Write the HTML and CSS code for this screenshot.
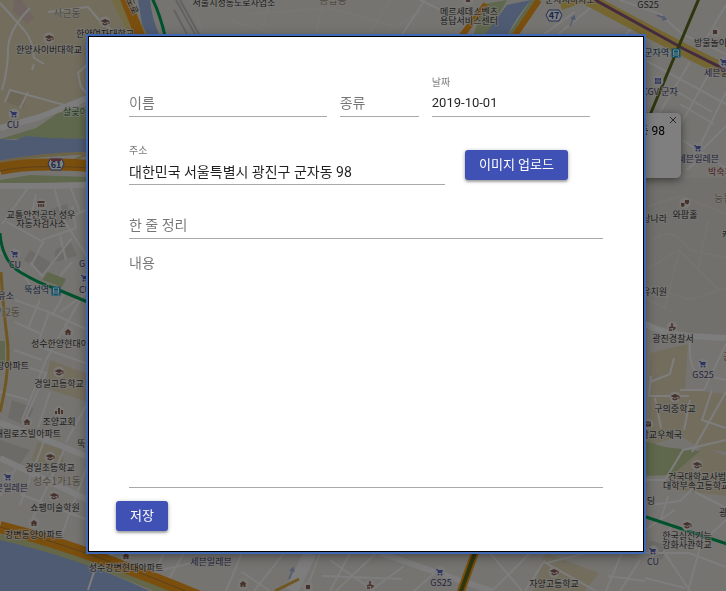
FILE: index.html
```html
<!DOCTYPE html>
<html lang="ko">
<head>
<meta charset="utf-8">
<meta name="viewport" content="width=device-width, initial-scale=1">
<title>장소 등록</title>
<link rel="stylesheet" href="styles.css">
</head>
<body>
<svg class="map" viewBox="0 0 726 591" preserveAspectRatio="xMidYMid slice" aria-hidden="true">
  <defs>
    <g id="school"><circle r="5.500" fill="#f4f2ee"/><path d="M-4.500-1 0-3 4.500-1 0 1zM-2.500.8 0 2l2.500-1.200V2.500L0 3.500l-2.500-1zM3.500-1h1v3h-1z" fill="#8d6257"/></g>
    <g id="cart"><circle r="5.500" fill="#f4f2f4"/><path d="M-4-3h1.500l.5 1h5l-1 3h-4l-1-3h-1z" fill="#5c6bc0"/><circle cx="-1.500" cy="2.500" r="1" fill="#5c6bc0"/><circle cx="1.500" cy="2.500" r="1" fill="#5c6bc0"/></g>
    <g id="home"><circle r="5.500" fill="#f4f2ee"/><path d="M-3.500 0 0-3 3.500 0H2.500v3h-2v-2h-1v2h-2V0z" fill="#8d6257"/></g>
    <g id="place"><circle r="5.500" fill="#f4f2ee"/><path d="M-2-2h4v4h-4z" fill="#8d6257"/></g>
    <g id="church"><circle r="5.500" fill="#f4f2ee"/><path d="M-4 0h2v3h-2zM-1-3h2v6h-2zM2-1h2v4h-2z" fill="#8d6257"/></g>
    <g id="museum"><circle r="5.500" fill="#f4f2ee"/><path d="M-3.500-3h7v2h-7zM-3 0h1.500v3h-1.500zM-.7 0h1.500v3h-1.500zM1.600 0h1.500v3h-1.500z" fill="#8d6257"/></g>
    <g id="cinema"><circle r="5.500" fill="#f4f2f4"/><path d="M-3-3h6v6h-6z" fill="#5c6bc0"/><path d="M-1-3v6M1-3v6M-3 0h6" stroke="#f4f2f4" stroke-width=".6"/></g>
    <g id="mail"><circle r="5.500" fill="#f4f2ee"/><path d="M-3-2.500h6v5h-6z" fill="#8d6257"/><path d="M-3-2.500 0 .5l3-3" fill="none" stroke="#f4f2ee"/></g>
    <g id="masks"><circle r="5.500" fill="#f4f2ee"/><path d="M0-3h4v3l-2 1.500-2-1.500zM-4 0h3.500v3l-1.700 1-1.800-1z" fill="#8d6257"/></g>
    <g id="figure"><circle r="5.500" fill="#f4f2ee"/><path d="M0-4v4l-3 1m3-1 3 1-2 2M-3 3h3" fill="none" stroke="#8d6257" stroke-width="1.500"/></g>
    <g id="station"><path d="M-4.500-4.500h9v9h-9z" fill="#12a5dc"/><path d="M-2.500-3h5v5h-5zM-2 2.500l-1 1.500M2 2.500l1 1.500" fill="none" stroke="#fff"/><path d="M-2 0h4" stroke="#fff"/></g>
  </defs>

  <rect width="726" height="591" fill="#ebe8e1"/>

  <!-- campuses and blocks -->
  <path d="M0 0h112l26 36-46 64-45 18-47 8z" fill="#e6dbbd"/>
  <path d="M14 0h8l12 18-7 6-14-13z" fill="#e3cac5"/>
  <path d="M10 90l17 5-3 13-18-6z" fill="#d9ceaf"/>
  <path d="M50 360l38 14v28l-43-14zM38 442l24 7 3 22-34-11z" fill="#e6dbbd"/>
  <path d="M650 353l38-9-3 45 41 5v58l-26-4-20-12-32 10zM668 476l35-30 23 10v40l-50-6zM545 553l54 20-14 18h-52z" fill="#e6dbbd"/>
  <path d="M645 178h81v160l-35-5-46-10z" fill="#e4e0d8"/>
  <path d="M49 210l18-6 4 14-14 8zM55 250l16-8 6 14-22 6zM30 250l20 12-4 14-22-16zM0 440l30 10-10 14-20-6zM12 400l22 8-8 18-18-8zM650 540l18 6-6 14-16-5z" fill="#d9d6cf"/>

  <!-- parks and water -->
  <path d="M0 139l36-11 22-15 32-8v34zM0 180l30-5 60 2v5l-60 1-30 4zM645 441l20 6 35 4-28 24-27 1zM48 272l18 7-4 8-20-7zM0 341h5v22l-5 2z" fill="#bfd19b"/>
  <path d="M0 139l16 1 10-4 24 2 40 1v14l-30 3-40 2-20 5z" fill="#9db7e6"/>
  <path d="M138 0h12q2 20 10 36h-16z" fill="#9db7e6"/>
  <path d="M484 4l23-4-20 36h-14zM531 0h8l-28 36h-4z" fill="#bfd19b"/>
  <path d="M507 5l24-5q-14 16-24 36h-23z" fill="#9db7e6"/>
  <path d="M0 538q70 16 150 53H0z" fill="#9db7e6"/>

  <!-- local streets -->
  <g class="streets">
    <path d="M30 8Q8 30 8 50T2 90M0 3l25 28q8 10 9 27l10 6M34 64l-2 6M48 12l40-5 12 14 16 12M5 102l5-12 65 18 15-14M90 62L78 73l3 14 7 8M28 92l-8 16"/>
    <path d="M0 128l40-11 50-20" stroke-width="6"/>
    <path d="M0 186h50l38-1" stroke-width="6"/>
    <path d="M54 186q8 34 16 44l18 28M70 186l10 26M2 224l26-36M7 222l36 20-12 24M36 194l-6 28M42 240l34-12-4-22M60 236l6 24M30 262l12 14 30-38M72 262l-12 14M75 215l13-6M0 252l20 16 14 24"/>
    <path d="M15 300l34 12-12 34 51 18M49 312l39 18M40 300l-12 28M64 294l-12 22M88 286l-42 74-24 60M60 312l28-20M15 322l26 12M14 350l28 10M20 365l26 8-20 44M0 392l28 8M50 392l-12 36M88 402l-22 40"/>
    <path d="M0 423l40 14 48 20M0 458l88 42" stroke-width="6"/>
    <path d="M44 441l-24 64M64 450l-32 70M88 464l-26 70M16 468l-16 28M20 494l68 26"/>
    <path d="M190 0q10 18 12 36M230 20l50 16M270 0l-10 36M325 0l-10 36M390 0l-22 36M440 0l-60 36M250 14l80-6 70 20" stroke="#efede7"/>
    <path d="M420 0l55 26M425 0l-24 36M575 12l-34 24M600 0l-44 36"/>
    <path d="M620 0l40 14 22 20 44 20M645 60l81 44M640 20l-16 16M726 5l-30 50M690 62l-42 70M712 68l-40 72M726 92l-34 70M680 104l34 20M674 90l38 22M645 110l35 10M682 140l44 28M700 152l26-26M686 170l22-16"/>
    <path d="M648 206l34-10 44 18M652 240q20-16 38 10l36 8M645 270l34-20 40 40M660 290l30 10 36-12M680 250l-16 60M708 220l-10 50M645 298l28 14" stroke="#e9e6e0"/>
    <path d="M645 324q20 10 44 12l37 2" stroke-width="6"/>
    <path d="M690 340q-2 30 10 34l26 6M726 344l-22 46h-24M651 376l-2 20h40M650 382l20-8 4-16M726 392l-34 60M712 390l-10 30 24 8M655 398l6 30M690 400l-6 30"/>
    <path d="M645 480h20l18-30 43-10M650 505l30-4 14-14M668 496l-8 26M695 492l31 16M645 530l30-20M672 522l-8 30 26 39M645 553h44l37 14M702 540l-14 51M726 520l-32 30M645 578l40 10"/>
    <path d="M88 590l10-30 18-7M164 553l-14 30M184 553l-20 34M204 560l-50 12M242 553l-16 38M242 572l28 19M284 553l-30 38M320 553l-14 38M330 560l44 31M350 553l-20 38M376 553l-40 38M404 566l-34 25M436 572l-22 19M322 576l80 3"/>
    <path d="M310 553l-18 38" stroke-width="13"/>
    <path d="M380 553l70 24 42 14" stroke-width="6"/>
    <path d="M490 553l32 38M530 553l-38 38M545 560l-20 31M586 553l-40 10 50 28M622 553l-16 38M640 560l-20 31M608 576l37 5"/>
  </g>

  <!-- arterial roads -->
  <path d="M118-4l22 42" stroke="#e8d68a" stroke-width="16"/>
  <path d="M124-4l17 42" stroke="#f59c1b" stroke-width="10"/>
  <path d="M539 0l-26 38M486 4l-26 34" stroke="#f59c1b" stroke-width="6"/>
  <path d="M560 4l22-8L684 50l44 22" fill="none" stroke="#eacb62" stroke-width="13"/>
  <path d="M588-4L684 49l44 22" fill="none" stroke="#895781" stroke-width="3"/>
  <path d="M0 162q40-8 90-9l-18 8" fill="none" stroke="#dbc98f" stroke-width="3"/>
  <path d="M0 169q30-7 90-3" fill="none" stroke="#f59c1b" stroke-width="12"/>
  <path d="M0 171q30-7 90-3" fill="none" stroke="#b88331"/>
  <path d="M1 272q2 35 6 65t-7 75" fill="none" stroke="#e1ae45" stroke-width="3"/>
  <path d="M0 536q80 18 170 58" fill="none" stroke="#c9cf92" stroke-width="8"/>
  <path d="M0 527q80 20 200 70" fill="none" stroke="#f59c1b" stroke-width="12"/>
  <path d="M0 527q80 20 200 70" fill="none" stroke="#b88331"/>
  <path d="M275 591l24-12" stroke="#e1ae45" stroke-width="3"/>
  <path d="M476 550l-16 44" stroke="#f59c1b" stroke-width="8"/>
  <path d="M476 550l-16 44" stroke="#5b6d1c" stroke-width="4"/>

  <!-- rail and subway -->
  <path d="M176 0l20 36M180 0l20 36M174 10l14 26" stroke="#c6c4c1" stroke-width="2"/>
  <path d="M152-2q8 16 13 38M0 233q2 28 20 39t34 16l36 15M640 515l90 30" fill="none" stroke="#00a45a" stroke-width="3"/>
  <path d="M700-4l-24 57-26 62" fill="none" stroke="#5b6d1c" stroke-width="3"/>

  <use href="#school" x="105" y="22"/><use href="#school" x="49" y="38"/><use href="#cart" x="14" y="114"/>
  <use href="#museum" x="41" y="204"/><use href="#cart" x="15" y="254"/><use href="#cart" x="85" y="278"/>
  <use href="#home" x="68" y="332"/><use href="#school" x="59" y="372"/><use href="#church" x="59" y="411"/><use href="#home" x="27" y="422"/>
  <use href="#school" x="50" y="457"/><use href="#cart" x="8" y="477"/><use href="#school" x="54" y="496"/><use href="#home" x="34" y="523"/>
  <use href="#home" x="126" y="556"/><use href="#home" x="243" y="584"/><use href="#place" x="308" y="587"/><use href="#figure" x="370" y="585"/><use href="#cart" x="440" y="572"/>
  <use href="#place" x="468" y="0"/><use href="#place" x="715" y="32"/><use href="#cart" x="724" y="62"/><use href="#cinema" x="658" y="81"/><use href="#cart" x="698" y="148"/>
  <use href="#masks" x="685" y="203"/><use href="#figure" x="672" y="327"/><use href="#cart" x="703" y="364"/><use href="#school" x="675" y="397"/><use href="#mail" x="648" y="424"/>
  <use href="#school" x="697" y="465"/><use href="#school" x="687" y="525"/><use href="#cart" x="653" y="551"/><use href="#school" x="554" y="572"/>
  <use href="#station" x="56" y="291"/><use href="#station" x="676" y="53"/>
  <path d="M289 579l4-10m-3 2 3-3 1 4M570 26l4-9m-3 2 3-3 1 4M657 15l9 4m-3-3 3 3-4 1" fill="none" stroke="#a7b3e0" stroke-width="1.500"/>

  <g class="shield">
    <path d="M50 159h12l2 5-3 6H51l-3-6zM549 10h10l3 5-3 6h-10l-3-6z"/>
    <path d="M51 160h10" class="shield-top"/>
    <text x="56" y="168">61</text><text x="554" y="19">47</text>
  </g>

  <g class="place-names">
    <text x="105" y="37">한양여자대학교</text><text x="49" y="53">한양사이버대학교</text>
    <text x="234" y="6">서울시성동도로사업소</text>
    <text x="469" y="15">메르세데스벤츠</text><text x="469" y="24">용답서비스센터</text>
    <text x="570" y="3">군자지하차도</text><text x="648" y="8">GS25</text>
    <text x="694" y="46" class="from-left">방울놀이터</text><text x="704" y="76" class="from-left shop">세븐일레븐</text>
    <text x="669" y="56" class="to-right subway">군자역</text><text x="660" y="95" class="shop">CGV 군자</text>
    <text x="13" y="128" class="shop">CU</text>
    <text x="63" y="115" class="from-left park">살곶이공원</text>
    <text x="41" y="218">교통안전공단 성우</text><text x="41" y="227">자동차검사소</text>
    <text x="15" y="268" class="shop">CU</text><text x="79" y="267" class="from-left shop">GS25</text><text x="79" y="293" class="from-left shop">CU</text>
    <text x="49" y="293" class="to-right subway">뚝섬역</text><text x="14" y="299" class="to-right shop">주유소</text>
    <text x="31" y="347" class="from-left">성수한양현대아파트</text><text x="29" y="369" class="to-right">장아파트</text>
    <text x="59" y="387">경일고등학교</text><text x="59" y="425">조양교회</text><text x="61" y="437" class="to-right">대림로즈빌아파트</text><text x="77" y="447" class="from-left">뚝섬</text>
    <text x="50" y="471">경일초등학교</text><text x="28" y="491" class="to-right shop">세븐일레븐</text><text x="55" y="511">쇼팽미술학원</text><text x="34" y="538">강변동양아파트</text>
    <text x="126" y="571">성수강변현대아파트</text><text x="211" y="565" class="shop">세븐일레븐</text><text x="441" y="586" class="shop">GS25</text><text x="554" y="587">자양고등학교</text>
    <text x="719" y="162" class="to-right shop">세븐일레븐</text><text x="708" y="175" class="from-left hospital">박숙희</text>
    <text x="685" y="218">와팝홀</text><text x="667" y="222" class="to-right">상나라</text><text x="722" y="238" class="from-left">캐슬</text><text x="667" y="295" class="to-right">유치원</text>
    <text x="673" y="342">광진경찰서</text><text x="703" y="378" class="shop">GS25</text><text x="723" y="360" class="from-left hospital">공원</text>
    <text x="675" y="412">구의중학교</text><text x="682" y="438" class="to-right">대학교우체국</text>
    <text x="668" y="480" class="from-left">건국대학교사범</text><text x="663" y="489" class="from-left">대학부속고등학교</text>
    <text x="655" y="504" class="to-right">빌딩</text><text x="719" y="516" class="from-left">광진</text>
    <text x="687" y="539">한국심신기능</text><text x="687" y="548">강화사관학교</text><text x="653" y="565" class="shop">CU</text>
    <text x="126" y="0" transform="rotate(65 126 0)" class="from-left">도로</text>
  </g>
  <g class="districts">
    <text x="67" y="17">사근동</text><text x="333" y="4">용답동</text><text x="8" y="316">가2동</text><text x="33" y="485" class="from-left">성수1가1동</text><text x="714" y="202" class="from-left">능동</text>
  </g>
  <g class="info-window">
    <rect x="560" y="113" width="121" height="65" rx="5" fill="#fff"/>
    <text x="665" y="135">군자동 98</text>
    <path d="M670 117l6 6m0-6l-6 6" stroke="#555"/>
  </g>
</svg>

<div class="backdrop">
  <main class="modal" role="dialog" aria-modal="true" aria-label="장소 등록">
    <form class="form">
      <div class="row row-basic">
        <div class="field">
          <label class="resting" for="name">이름</label>
          <input id="name" type="text">
        </div>
        <div class="field">
          <label class="resting" for="kind">종류</label>
          <input id="kind" type="text">
        </div>
        <div class="field">
          <label for="date">날짜</label>
          <input id="date" class="date" type="text" value="2019-10-01">
        </div>
      </div>
      <div class="row row-address">
        <div class="field">
          <label for="address">주소</label>
          <input id="address" type="text" value="대한민국 서울특별시 광진구 군자동 98">
        </div>
        <button class="button upload" type="button">이미지 업로드</button>
      </div>
      <div class="field">
        <label class="resting" for="summary">한 줄 정리</label>
        <input id="summary" type="text">
      </div>
      <div class="field field-long">
        <label class="resting" for="content">내용</label>
        <textarea id="content"></textarea>
      </div>
    </form>
    <button class="button save" type="button">저장</button>
  </main>
</div>
</body>
</html>
```

FILE: styles.css
```css
* {
  box-sizing: border-box;
}

body {
  margin: 0;
  min-height: 100vh;
  font-family: Roboto, "Noto Sans CJK KR", sans-serif;
  font-size: 14px;
}

/* Map behind the dialog */
.map {
  position: fixed;
  inset: 0;
  width: 100%;
  height: 100%;
}

.streets {
  fill: none;
  stroke: #fbfafa;
  stroke-width: 2;
}

.place-names,
.districts,
.shield {
  font-family: "Noto Sans CJK KR", sans-serif;
  font-size: 9px;
  text-anchor: middle;
}

.place-names {
  fill: #3c3c3c;
  stroke: #f4f2ee;
  stroke-width: 2;
  stroke-opacity: 0.7;
  paint-order: stroke;
}

.from-left {
  text-anchor: start;
}

.to-right {
  text-anchor: end;
}

.place-names .shop {
  fill: #48487c;
}

.place-names .subway {
  fill: #264f78;
}

.place-names .park {
  fill: #3d7a3d;
}

.place-names .hospital {
  fill: #a14545;
}

.districts {
  fill: #a3977e;
  stroke: #f4f2ee;
  stroke-width: 1;
  paint-order: stroke;
  font-size: 10px;
}

.shield path {
  fill: #fff;
  stroke: #4865a8;
}

.shield .shield-top {
  stroke: #c2505a;
  stroke-width: 2;
}

.shield text {
  fill: #34519b;
  font-weight: 700;
}

.info-window {
  filter: drop-shadow(0 2px 4px rgba(0, 0, 0, 0.5));
}

.info-window text {
  font-size: 12px;
  text-anchor: end;
}

/* Dialog */
.backdrop {
  position: relative;
  min-height: 100vh;
  padding: 36px 82px 39px 88px;
  background: rgba(0, 0, 0, 0.5);
}

.modal {
  padding: 38px 40px 20px;
  border: 1px solid #000;
  outline: 2px solid #3f68b5;
  background: #fff;
  box-shadow: 0 3px 12px rgba(0, 0, 0, 0.5);
}

.form {
  display: flex;
  flex-direction: column;
  gap: 12px;
  margin-bottom: 13px;
}

.row {
  display: grid;
}

.row-basic {
  grid-template-columns: 5fr 2fr 4fr;
  gap: 13px;
  padding-right: 13px;
  margin-bottom: 14px;
}

.row-address {
  grid-template-columns: 2fr 1fr;
}

.field {
  display: grid;
  grid-template-rows: 16px 26px;
  min-width: 0;
}

.field label {
  grid-area: 1 / 1;
  color: rgba(0, 0, 0, 0.54);
  font-size: 10px;
  line-height: 16px;
}

.field .resting {
  grid-area: 2 / 1;
  font-size: 14px;
  line-height: 25px;
  pointer-events: none;
}

.field input,
.field textarea {
  grid-area: 2 / 1;
  width: 100%;
  min-width: 0;
  margin: 0;
  padding: 0 0 2px;
  border: 0;
  border-bottom: 1px solid #a9a9a9;
  border-radius: 0;
  outline: 0;
  background: transparent;
  color: rgba(0, 0, 0, 0.87);
  font: inherit;
  resize: none;
}

.field .date {
  font-size: 13px;
}

.field-long {
  grid-template-rows: 0 237px;
}

.button {
  display: block;
  height: 30px;
  padding: 0 14px;
  border: 0;
  border-radius: 3px;
  background: #3f51b5;
  box-shadow: 0 1px 4px rgba(0, 0, 0, 0.3), 0 2px 2px rgba(0, 0, 0, 0.2);
  color: #fff;
  font: 400 13px/28px Roboto, "Noto Sans CJK KR", sans-serif;
}

.save {
  margin-left: -13px;
}

.upload {
  align-self: end;
  justify-self: start;
  margin: 0 0 5px 20px;
}
```
